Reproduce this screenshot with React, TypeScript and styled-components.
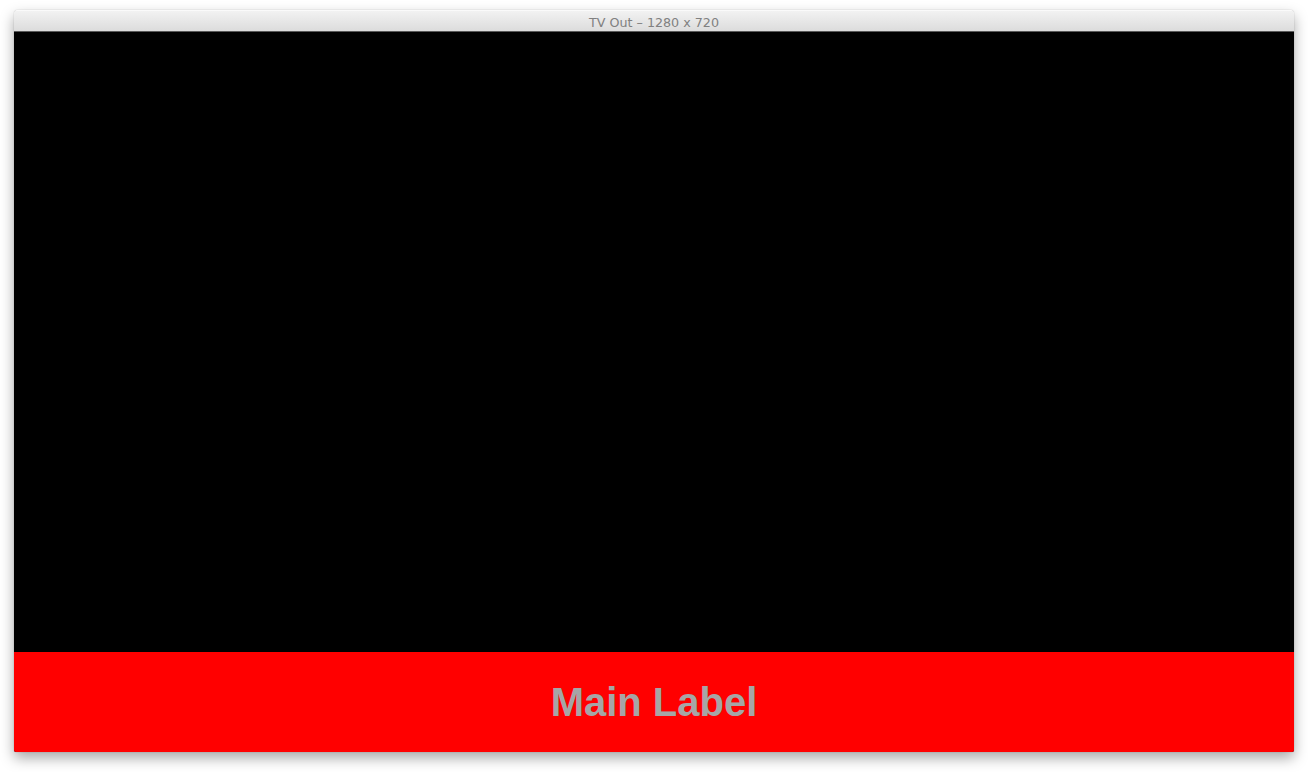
import * as React from 'react';
import styled, { createGlobalStyle } from 'styled-components';

const GlobalStyle = createGlobalStyle({
  'html, body': {
    margin: 0,
    padding: 0,
    background: '#ffffff',
  },
});

const Page = styled.div({
  width: '1308px',
  height: '772px',
  boxSizing: 'border-box',
  padding: '10px 14px 20px 14px',
  display: 'flex',
  justifyContent: 'center',
  alignItems: 'flex-start',
  overflow: 'hidden',
});

const Window = styled.div({
  width: '1280px',
  display: 'flex',
  flexDirection: 'column',
  borderRadius: '4px 4px 2px 2px',
  boxShadow: '0 6px 14px rgba(0, 0, 0, 0.35), 0 0 1px rgba(0, 0, 0, 0.4)',
  overflow: 'hidden',
});

const TitleBar = styled.div({
  height: '22px',
  boxSizing: 'border-box',
  display: 'flex',
  alignItems: 'center',
  justifyContent: 'center',
  paddingTop: '2px',
  background: 'linear-gradient(#f2f2f2, #dcdcdc)',
  borderTop: '1px solid #fafafa',
  borderBottom: '1px solid #5a5a5a',
  fontFamily: '"DejaVu Sans", "Liberation Sans", sans-serif',
  fontSize: '12.7px',
  color: '#808080',
});

const Screen = styled.div({
  height: '720px',
  display: 'flex',
  flexDirection: 'column',
  background: '#000000',
});

const Video = styled.div({
  flex: 1,
});

const LowerThird = styled.div<{ $bg: string }>(({ $bg }) => ({
  height: '100px',
  display: 'flex',
  alignItems: 'center',
  justifyContent: 'center',
  background: $bg,
}));

const Label = styled.span({
  fontFamily: '"Liberation Sans", Arial, sans-serif',
  fontWeight: 'bold',
  fontSize: '40px',
  color: '#a6a6a6',
});

export default function App() {
  return (
    <>
      <GlobalStyle />
      <Page>
        <Window>
          <TitleBar>TV Out – 1280 x 720</TitleBar>
          <Screen>
            <Video />
            <LowerThird $bg="#ff0000">
              <Label>Main Label</Label>
            </LowerThird>
          </Screen>
        </Window>
      </Page>
    </>
  );
}
